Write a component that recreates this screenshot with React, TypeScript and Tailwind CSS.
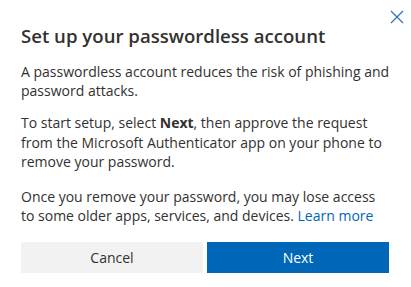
export default function App() {
  return (
    <div className="relative h-[287px] w-[411px] bg-white font-['Open_Sans',sans-serif] text-[#323130]">
      <button
        type="button"
        aria-label="Close"
        className="absolute right-[7px] top-[9px] flex h-[15px] w-[15px] items-center justify-center"
      >
        <svg width="14" height="14" viewBox="0 0 14 14" fill="none">
          <path d="M1 1 L13 13 M13 1 L1 13" stroke="#2f6db5" strokeWidth="1.2" />
        </svg>
      </button>

      <div className="flex flex-col px-[21px] pt-[22px]">
        <h1 className="text-[18.6px] font-semibold leading-[28px]">
          Set up your passwordless account
        </h1>
        <p className="mt-[12px] text-[14px] leading-[19.2px]">
          A passwordless account reduces the risk of phishing and password attacks.
        </p>
        <p className="mt-[13px] text-[14px] leading-[19.2px]">
          To start setup, select <b className="font-bold">Next</b>, then approve the request
          from the Microsoft Authenticator app on your phone to remove your password.
        </p>
        <p className="mt-[16px] text-[14px] leading-[19.2px]">
          Once you remove your password, you may lose access to some older apps, services,
          and devices.{" "}
          <a href="#" className="text-[#0067b8]">
            Learn more
          </a>
        </p>
        <div className="mt-[17px] flex w-[368px] gap-[4px]">
          <button
            type="button"
            className="h-[31px] flex-1 bg-[#f2f2f2] text-[14px] text-[#323130]"
          >
            Cancel
          </button>
          <button
            type="button"
            className="h-[31px] flex-1 bg-[#0067b8] text-[14px] text-white"
          >
            Next
          </button>
        </div>
      </div>
    </div>
  );
}
